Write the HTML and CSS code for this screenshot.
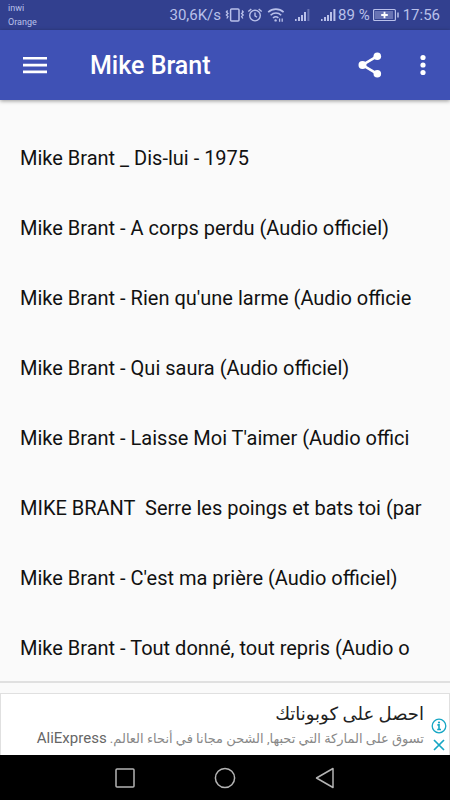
FILE: index.html
```html
<!DOCTYPE html>
<html lang="fr">
<head>
  <meta charset="UTF-8" />
  <meta name="viewport" content="width=device-width, initial-scale=1" />
  <title>Mike Brant</title>
  <link rel="stylesheet" href="styles.css">
</head>
<body>

  <div class="status-bar">
    <div class="carriers">
      <div>inwi</div>
      <div>Orange</div>
    </div>
    <div class="status-info">
      <span class="speed">30,6K/s</span>
      <svg class="icon-vibrate" width="20" height="16" viewBox="0 0 20 16" fill="none" stroke="currentColor">
        <rect x="5.6" y="2" width="8.4" height="12" rx="1" stroke-width="1.5" />
        <path d="M2.6 3.5l-1.2 1.5 1.6 1.5-1.6 1.5 1.6 1.5-1.2 2M17 3.5l1.2 1.5-1.6 1.5 1.6 1.5-1.6 1.5 1.2 2" stroke-width="1.3" />
      </svg>
      <svg class="icon-alarm" width="16" height="16" viewBox="0 0 16 16" fill="none" stroke="currentColor" stroke-width="1.4">
        <circle cx="8" cy="8.6" r="5.3" />
        <path d="M8 5.6v3.2l2 1.4M1.3 4.6l3-2.7M14.7 4.6l-3-2.7" />
      </svg>
      <svg class="icon-wifi" width="18" height="16" viewBox="0 0 18 16" fill="none" stroke="currentColor" stroke-width="1.6">
        <path d="M1.2 5.2a11.2 11.2 0 0 1 15.4 0M3.6 8.2a7.6 7.6 0 0 1 10.6 0M6 11a4.2 4.2 0 0 1 5.4-.2" />
        <circle cx="8.6" cy="13.4" r="1.2" fill="currentColor" stroke="none" />
        <path d="M12.6 11.4v3.4M15.2 11.4v3.4" stroke-width="1.3" />
      </svg>
      <svg class="icon-signal" width="15" height="14" viewBox="0 0 15 14" fill="currentColor">
        <path d="M0 11h1.6v2H0zM3 9h2v4H3zM6 7h2v6H6zM9 4h2v9H9z" />
        <path d="M12.4 1h2v12h-2z" opacity=".4" />
      </svg>
      <svg class="icon-signal-full" width="15" height="14" viewBox="0 0 15 14" fill="currentColor">
        <path d="M0 11h1.6v2H0zM3 9h2v4H3zM6 7h2v6H6zM9 4h2v9H9zM12.4 1h2v12h-2z" />
      </svg>
      <span class="percent">89 %</span>
      <svg class="icon-battery" width="26" height="14" viewBox="0 0 26 14" fill="none" stroke="currentColor">
        <rect x=".6" y="1.5" width="21.8" height="11" rx="1" stroke-width="1.2" />
        <rect x="2" y="3" width="18" height="8" fill="currentColor" stroke="none" opacity=".4" />
        <path d="M25 4.5v5" stroke-width="1.5" />
        <path d="M11.5 3.7v6.6M8.2 7h6.6" stroke="#fff" stroke-width="1.8" />
      </svg>
      <span class="clock">17:56</span>
    </div>
  </div>

  <header class="app-bar">
    <button class="icon-button" id="menuBtn" aria-label="Menu">
      <svg width="24" height="18" viewBox="0 0 24 18" fill="#fff">
        <path d="M0 1h24v2.6H0zM0 7.8h24v2.6H0zM0 14.6h24v2.6H0z" />
      </svg>
    </button>
    <h1>Mike Brant</h1>
    <button class="icon-button" id="shareBtn" aria-label="Partager">
      <svg width="24" height="26" viewBox="0 0 24 26" fill="#fff">
        <path d="M19.3 4.2L4.5 13l14.8 8.8" fill="none" stroke="#fff" stroke-width="2.6" />
        <circle cx="19.3" cy="4.2" r="3.8" />
        <circle cx="4.5" cy="13" r="4" />
        <circle cx="19.3" cy="21.8" r="3.8" />
      </svg>
    </button>
    <button class="icon-button more" id="moreBtn" aria-label="Plus">
      <svg width="6" height="22" viewBox="0 0 6 22" fill="#fff">
        <circle cx="3" cy="3.5" r="2.6" />
        <circle cx="3" cy="11" r="2.6" />
        <circle cx="3" cy="18.5" r="2.6" />
      </svg>
    </button>
  </header>

  <ul class="songs">
    <li>Mike Brant _ Dis-lui - 1975</li>
    <li>Mike Brant - A corps perdu (Audio officiel)</li>
    <li>Mike Brant - Rien qu'une larme (Audio officie</li>
    <li>Mike Brant - Qui saura (Audio officiel)</li>
    <li>Mike Brant - Laisse Moi T'aimer (Audio offici</li>
    <li>MIKE BRANT  Serre les poings et bats toi (par</li>
    <li>Mike Brant - C'est ma prière (Audio officiel)</li>
    <li>Mike Brant - Tout donné, tout repris (Audio o</li>
  </ul>

  <div class="ad">
    <div class="ad-text" dir="rtl" lang="ar">
      <div class="ad-title">احصل على كوبوناتك</div>
      <div class="ad-desc">تسوق على الماركة التي تحبها, الشحن مجانا في أنحاء العالم. <span class="brand">AliExpress</span></div>
    </div>
    <div class="ad-choices">
      <button aria-label="Info">
        <svg width="16" height="16" viewBox="0 0 16 16" fill="none" stroke="#16a6c4">
          <circle cx="8" cy="8" r="6.8" stroke-width="1.3" />
          <path d="M6.4 6.9H8v4.6M6.2 11.5h3.8" stroke-width="1.6" />
          <circle cx="8" cy="4.5" r="1.1" fill="#16a6c4" stroke="none" />
        </svg>
      </button>
      <button aria-label="Fermer">
        <svg width="16" height="14" viewBox="0 0 16 14" fill="none" stroke="#16a6c4" stroke-width="1.7">
          <path d="M3 2l10 10M13 2L3 12" />
        </svg>
      </button>
    </div>
  </div>

  <nav class="nav-bar">
    <button aria-label="Applications">
      <svg width="22" height="22" viewBox="0 0 22 22" fill="none" stroke="#b4b4b4" stroke-width="1.5">
        <rect x="2" y="2" width="18" height="18" rx="1" />
      </svg>
    </button>
    <button aria-label="Accueil">
      <svg width="22" height="22" viewBox="0 0 22 22" fill="none" stroke="#b4b4b4" stroke-width="1.5">
        <circle cx="11" cy="11" r="9.6" />
      </svg>
    </button>
    <button aria-label="Retour">
      <svg width="22" height="22" viewBox="0 0 22 22" fill="none" stroke="#b4b4b4" stroke-width="1.5" stroke-linejoin="round">
        <path d="M19 1.5v19L2.5 11z" />
      </svg>
    </button>
  </nav>

</body>
</html>
```
FILE: styles.css
```css
* {
  box-sizing: border-box;
}

body {
  margin: 0;
  min-height: 100vh;
  display: flex;
  flex-direction: column;
  font-family: Roboto, "DejaVu Sans", sans-serif;
  background: #fafafa;
  color: #111;
}

button {
  display: flex;
  align-items: center;
  justify-content: center;
  padding: 0;
  border: none;
  background: none;
  cursor: pointer;
}

svg {
  display: block;
  flex: none;
}

/* status bar */
.status-bar {
  display: flex;
  align-items: center;
  justify-content: space-between;
  height: 30px;
  padding: 0 10px 0 8px;
  background: #32408f;
  color: #b9c0ea;
}

.carriers {
  font-size: 9px;
  line-height: 14px;
}

.status-info {
  display: flex;
  align-items: center;
  font-size: 15px;
  white-space: nowrap;
}

.icon-vibrate {
  margin-left: 4px;
}

.icon-alarm {
  margin-left: 2px;
}

.icon-wifi {
  margin-left: 4px;
}

.icon-signal {
  margin-left: 10px;
}

.icon-signal-full {
  margin: 0 2px 0 11px;
}

.icon-battery {
  margin: 0 4px 0 3px;
}

/* toolbar */
.app-bar {
  display: flex;
  align-items: center;
  height: 70px;
  padding: 0 15px;
  background: #3f51b5;
  box-shadow: 0 1px 4px rgba(0, 0, 0, 0.4);
}

.app-bar h1 {
  flex: 1;
  margin: 0 0 0 35px;
  padding-top: 2px;
  font-size: 25px;
  font-weight: 500;
  line-height: 30px;
  color: #fff;
}

.icon-button {
  width: 40px;
  height: 40px;
}

.more {
  width: 25px;
  margin-left: 20px;
}

/* song list */
.songs {
  flex: 1;
  margin: 0;
  padding: 23px 20px 0;
  list-style: none;
  border-bottom: 2px solid #e0e0e0;
}

.songs li {
  height: 70px;
  font-size: 20px;
  line-height: 70px;
  white-space: pre;
  overflow: hidden;
}

.songs li:last-child {
  height: 58px;
}

/* ad banner */
.ad {
  display: flex;
  height: 62px;
  margin-top: 10px;
  background: #fff;
  border: 1px solid #e0e0e0;
  border-bottom: none;
}

.ad-text {
  flex: 1;
  padding-top: 6px;
  white-space: nowrap;
}

.ad-title {
  font-size: 18px;
  line-height: 28px;
  color: #222;
}

.ad-desc {
  font-size: 13px;
  line-height: 20px;
  color: #888;
}

.brand {
  font-size: 15px;
  color: #666;
}

.ad-choices {
  display: flex;
  flex-direction: column;
  justify-content: flex-end;
  gap: 4px;
  margin-left: 7px;
  padding: 0 2px 3px 0;
}

/* system navigation */
.nav-bar {
  display: flex;
  align-items: center;
  justify-content: center;
  gap: 78px;
  height: 45px;
  background: #000;
}
```
